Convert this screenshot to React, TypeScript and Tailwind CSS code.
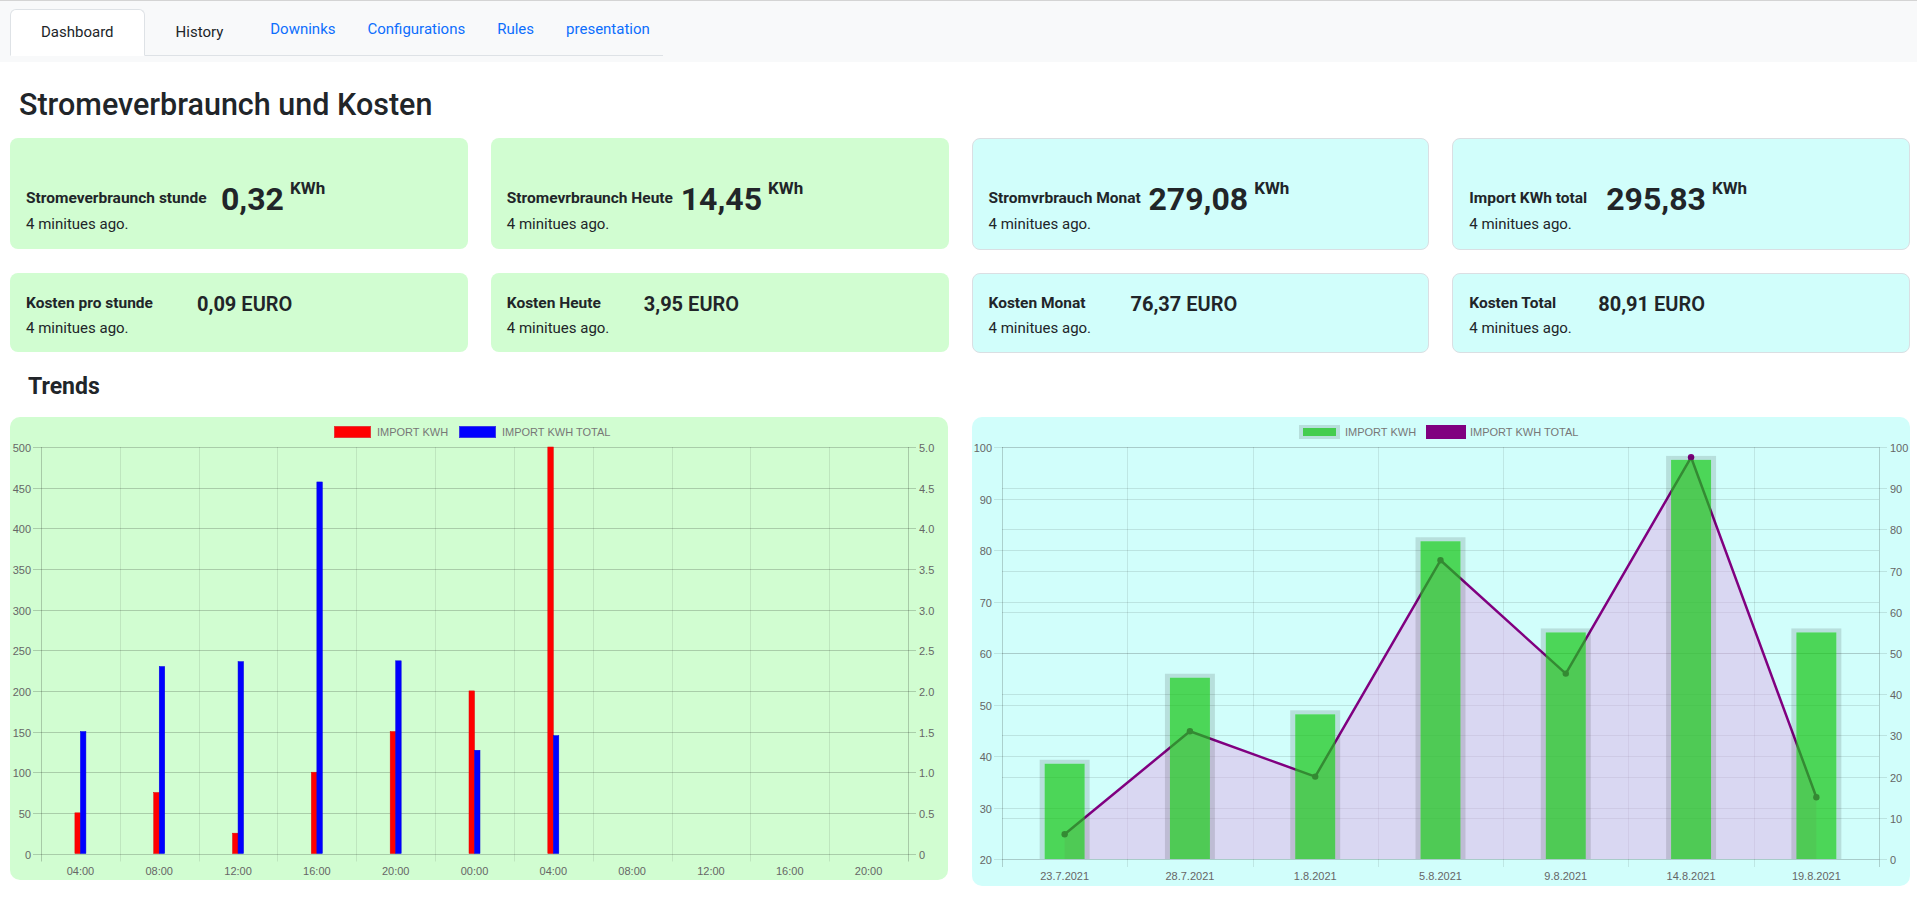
import React from "react";

type StatRow1 = { label: string; value: string; lw: string; cyan?: boolean };

const row1: StatRow1[] = [
  { label: "Stromeverbraunch stunde", value: "0,32", lw: "w-[195px]" },
  { label: "Stromevrbraunch Heute", value: "14,45", lw: "w-[174px]" },
  { label: "Stromvrbrauch Monat", value: "279,08", lw: "w-[160px]", cyan: true },
  { label: "Import KWh total", value: "295,83", lw: "w-[137px]", cyan: true },
];

const row2: StatRow1[] = [
  { label: "Kosten pro stunde", value: "0,09", lw: "w-[171px]" },
  { label: "Kosten Heute", value: "3,95", lw: "w-[137px]" },
  { label: "Kosten Monat", value: "76,37", lw: "w-[142px]", cyan: true },
  { label: "Kosten Total", value: "80,91", lw: "w-[129px]", cyan: true },
];

function Nav() {
  return (
    <div className="h-[62px] bg-[#f8f9fa] border-t border-[#d4d4d4] pl-[10px] pt-[8px]">
      <ul className="flex items-start w-[653px] h-[47px] border-b border-[#dee2e6] text-[15px]">
        <li className="h-[47px] px-[30px] flex items-center bg-white border border-[#dee2e6] border-b-white rounded-t-[6px] text-[#212529]">
          Dashboard
        </li>
        <li className="h-[47px] px-[30px] flex items-center border border-transparent text-[#212529]">
          History
        </li>
        {["Downinks", "Configurations", "Rules", "presentation"].map((t) => (
          <li key={t} className="h-[40px] px-4 flex items-center text-[#0d6efd]">
            {t}
          </li>
        ))}
      </ul>
    </div>
  );
}

function BigCard({ d }: { d: StatRow1 }) {
  return (
    <div
      className={
        d.cyan
          ? "h-[112px] rounded-[8px] bg-[#d1fefb] border border-[#dadfe3] px-4 pb-[15px] flex flex-col justify-end"
          : "h-[111px] rounded-[8px] bg-[#d1fdd1] px-4 pb-[15px] flex flex-col justify-end"
      }
    >
      <div className="flex items-center h-[31px] whitespace-nowrap">
        <span className={d.lw + " shrink-0 text-[15.5px] font-bold leading-none"}>{d.label}</span>
        <span className="text-[32px] font-bold leading-none">{d.value}</span>
        <span className="ml-[6px] mb-[21px] text-[17px] font-bold leading-none">KWh</span>
      </div>
      <div className="text-[15px] leading-[20px]">4 minitues ago.</div>
    </div>
  );
}

function SmallCard({ d }: { d: StatRow1 }) {
  return (
    <div
      className={
        d.cyan
          ? "h-[80px] rounded-[8px] bg-[#d1fefb] border border-[#dadfe3] px-4 pb-[14px] flex flex-col justify-end"
          : "h-[79px] rounded-[8px] bg-[#d1fdd1] px-4 pb-[14px] flex flex-col justify-end"
      }
    >
      <div className="flex items-center h-[28px] whitespace-nowrap">
        <span className={d.lw + " shrink-0 text-[15.5px] font-bold leading-none"}>{d.label}</span>
        <span className="text-[20px] font-bold leading-none">{d.value}</span>
        <span className="ml-[5px] text-[20px] font-semibold leading-none">EURO</span>
      </div>
      <div className="text-[15px] leading-[20px]">4 minitues ago.</div>
    </div>
  );
}

function LeftChart() {
  const W = 938,
    H = 463,
    L = 31,
    R = 898,
    T = 30,
    B = 436.5;
  const n = 11;
  const cw = (R - L) / n;
  const xLabels = ["04:00", "08:00", "12:00", "16:00", "20:00", "00:00", "04:00", "08:00", "12:00", "16:00", "20:00"];
  const red = [50, 75, 25, 100, 150, 200, 500];
  const blue = [150, 230, 236, 457, 237, 127, 145];
  const yv = (v: number) => B - (v / 500) * (B - T);
  const lefts = [500, 450, 400, 350, 300, 250, 200, 150, 100, 50, 0];
  const rights = ["5.0", "4.5", "4.0", "3.5", "3.0", "2.5", "2.0", "1.5", "1.0", "0.5", "0"];
  return (
    <svg
      viewBox={`0 0 ${W} ${H}`}
      width={W}
      height={H}
      className="block"
      fontFamily="'Liberation Sans', Arial, sans-serif"
      fontSize="11"
    >
      {Array.from({ length: n + 1 }, (_, k) => {
        const x = Math.round(L + k * cw) + 0.5;
        return (
          <line
            key={"v" + k}
            x1={x}
            x2={x}
            y1={T}
            y2={B + 8}
            stroke={k === 0 || k === n ? "rgba(0,0,0,0.2)" : "rgba(0,0,0,0.09)"}
            strokeWidth="1"
          />
        );
      })}
      {lefts.map((v, j) => {
        const y = Math.round(T + (j * (B - T)) / 10) + 0.5;
        return (
          <g key={"h" + j}>
            <line x1={L - 8} x2={R + 8} y1={y} y2={y} stroke="rgba(0,0,0,0.19)" strokeWidth="1" />
            <text x={L - 10} y={y + 4} textAnchor="end" fill="#666">
              {v}
            </text>
            <text x={R + 11} y={y + 4} textAnchor="start" fill="#666">
              {rights[j]}
            </text>
          </g>
        );
      })}
      {xLabels.map((t, i) => (
        <text key={"x" + i} x={L + cw * (i + 0.5)} y={458} textAnchor="middle" fill="#666">
          {t}
        </text>
      ))}
      {red.map((v, i) => {
        const c = L + cw * (i + 0.5);
        return <rect key={"r" + i} x={c - 5.5} y={yv(v)} width={5.5} height={B - yv(v)} fill="#ff0000" stroke="#e00000" strokeWidth="0.5" />;
      })}
      {blue.map((v, i) => {
        const c = L + cw * (i + 0.5);
        return <rect key={"b" + i} x={c} y={yv(v)} width={5.5} height={B - yv(v)} fill="#0000ff" stroke="#0000e0" strokeWidth="0.5" />;
      })}
      <rect x={324.5} y={9.5} width={36} height={11} fill="#ff0000" stroke="#e43a3a" strokeWidth="1" />
      <text x={367} y={19} fill="#777">
        IMPORT KWH
      </text>
      <rect x={449.5} y={9.5} width={36} height={11} fill="#0000ff" stroke="#3a3ae4" strokeWidth="1" />
      <text x={492} y={19} fill="#777">
        IMPORT KWH TOTAL
      </text>
    </svg>
  );
}

function RightChart() {
  const W = 938,
    H = 469,
    L = 30,
    R = 907,
    T = 30,
    B = 442;
  const n = 7;
  const cw = (R - L) / n;
  const xLabels = ["23.7.2021", "28.7.2021", "1.8.2021", "5.8.2021", "9.8.2021", "14.8.2021", "19.8.2021"];
  const bars = [38.5, 55.2, 48.1, 81.7, 64, 97.5, 64];
  const line = [6, 31, 20, 72.5, 45, 97.5, 15];
  const yl = (v: number) => T + ((100 - v) / 80) * (B - T);
  const yr = (v: number) => T + ((100 - v) / 100) * (B - T);
  const cx = (i: number) => L + cw * (i + 0.5);
  const leftTicks = [100, 90, 80, 70, 60, 50, 40, 30, 20];
  const rightTicks = [100, 90, 80, 70, 60, 50, 40, 30, 20, 10, 0];
  const pts = line.map((v, i) => `${cx(i)},${yr(v)}`).join(" ");
  const area = `${pts} ${cx(6)},${B} ${cx(0)},${B}`;
  return (
    <svg
      viewBox={`0 0 ${W} ${H}`}
      width={W}
      height={H}
      className="block"
      fontFamily="'Liberation Sans', Arial, sans-serif"
      fontSize="11"
    >
      {Array.from({ length: n + 1 }, (_, k) => {
        const x = Math.round(L + k * cw) + 0.5;
        return (
          <line
            key={"v" + k}
            x1={x}
            x2={x}
            y1={T}
            y2={B + 8}
            stroke={k === 0 || k === n ? "rgba(0,0,0,0.18)" : "rgba(0,0,0,0.09)"}
            strokeWidth="1"
          />
        );
      })}
      {leftTicks.map((v) => {
        const y = Math.round(yl(v)) + 0.5;
        return (
          <g key={"l" + v}>
            <line x1={L - 8} x2={R} y1={y} y2={y} stroke="rgba(0,0,0,0.1)" strokeWidth="1" />
            <text x={L - 10} y={y + 4} textAnchor="end" fill="#666">
              {v}
            </text>
          </g>
        );
      })}
      {rightTicks.map((v) => {
        const y = Math.round(yr(v)) + 0.5;
        return (
          <g key={"r" + v}>
            <line x1={L} x2={R + 8} y1={y} y2={y} stroke="rgba(0,0,0,0.1)" strokeWidth="1" />
            <text x={R + 11} y={y + 4} textAnchor="start" fill="#666">
              {v}
            </text>
          </g>
        );
      })}
      {xLabels.map((t, i) => (
        <text key={"x" + i} x={cx(i)} y={463} textAnchor="middle" fill="#666">
          {t}
        </text>
      ))}
      <polygon points={area} fill="rgba(225,175,233,0.5)" />
      <polyline points={pts} fill="none" stroke="#800080" strokeWidth="2.5" strokeLinejoin="round" />
      {line.map((v, i) => (
        <circle key={"p" + i} cx={cx(i)} cy={yr(v)} r={3.2} fill="#800080" />
      ))}
      {bars.map((v, i) => {
        const c = cx(i);
        const top = yl(v);
        return (
          <g key={"bar" + i}>
            <rect x={c - 25} y={top - 4} width={5} height={B - top + 4} fill="rgba(0,0,0,0.12)" />
            <rect x={c + 20} y={top - 4} width={5} height={B - top + 4} fill="rgba(0,0,0,0.12)" />
            <rect x={c - 20} y={top - 4} width={40} height={4} fill="rgba(0,0,0,0.12)" />
            <rect x={c - 20} y={top} width={40} height={B - top} fill="rgba(20,197,18,0.7)" />
          </g>
        );
      })}
      <rect x={327} y={8} width={41} height={14} fill="rgba(0,0,0,0.12)" />
      <rect x={331} y={11} width={33} height={8} fill="rgba(20,197,18,0.7)" />
      <text x={373} y={19} fill="#777">
        IMPORT KWH
      </text>
      <rect x={454} y={8} width={40} height={14} fill="#800080" />
      <text x={498} y={19} fill="#777">
        IMPORT KWH TOTAL
      </text>
    </svg>
  );
}

export default function App() {
  return (
    <div className="min-h-screen bg-white font-[Roboto,sans-serif] text-[#212529]">
      <Nav />
      <h3 className="pl-[19px] pt-[25px] text-[30.5px] leading-[35px] font-medium">Stromeverbraunch und Kosten</h3>
      <div className="mt-[16px] grid grid-cols-4 gap-x-[23px] gap-y-[23px] pl-[10px] pr-[7px] items-start">
        {row1.map((d) => (
          <BigCard key={d.label} d={d} />
        ))}
        {row2.map((d) => (
          <SmallCard key={d.label} d={d} />
        ))}
      </div>
      <h4 className="mt-[21px] pl-[28px] text-[23px] leading-[26px] font-bold">Trends</h4>
      <div className="mt-[17px] grid grid-cols-2 gap-x-[24px] items-start pl-[10px] pr-[7px]">
        <div className="h-[463px] rounded-[10px] bg-[#d1fdd1] overflow-hidden">
          <LeftChart />
        </div>
        <div className="h-[469px] rounded-[10px] bg-[#d1fefb] overflow-hidden">
          <RightChart />
        </div>
      </div>
    </div>
  );
}
